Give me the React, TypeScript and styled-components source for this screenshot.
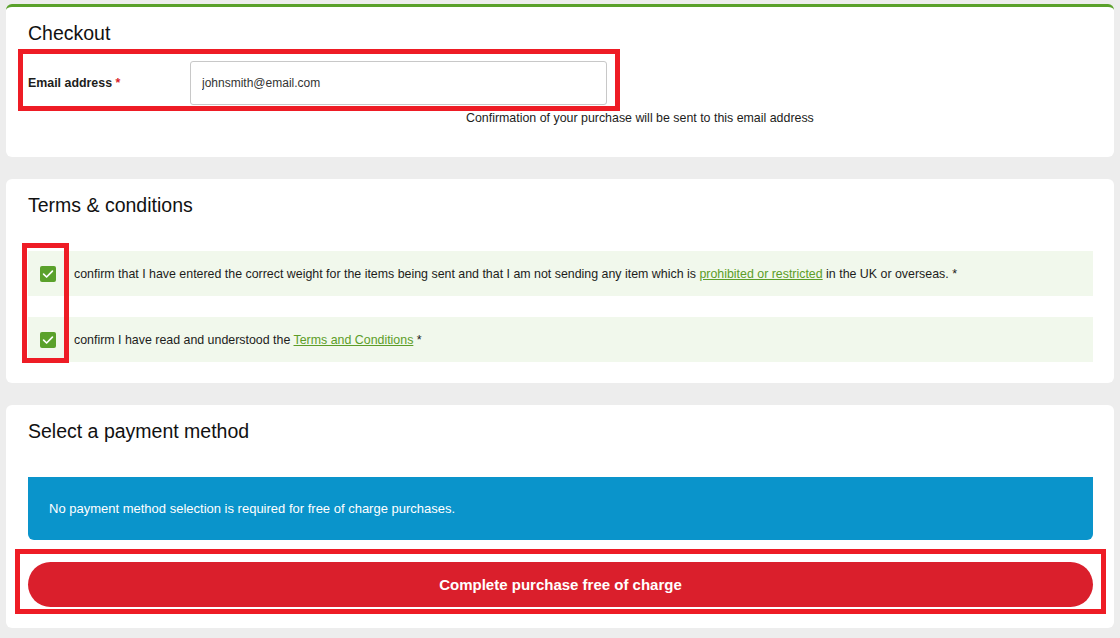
import styled, { createGlobalStyle } from "styled-components";

const GlobalStyle = createGlobalStyle`
  body {
    margin: 0;
    background: #ededed;
    font-family: "Liberation Sans", Arial, sans-serif;
    color: #1d1d1b;
  }
`;

const Page = styled.div`
  display: flex;
  flex-direction: column;
  gap: 22px;
  padding: 4px 6px 8px;
`;

const Card = styled.section<{ $accent?: boolean }>`
  background: #fff;
  border-radius: 6px;
  border-top: ${(props) => (props.$accent ? "3px solid #5aa12b" : "none")};
  padding: 14px 21px 21px 22px;
`;

const Title = styled.h2`
  margin: 0;
  font-size: 19.5px;
  line-height: 24px;
  font-weight: normal;
  color: #111;
`;

// red annotation frames drawn over the screenshot
const Mark = styled.div<{ $t: number; $r: number; $b: number; $l: number; $w?: number }>`
  position: absolute;
  box-sizing: border-box;
  top: ${(p) => -p.$t}px;
  bottom: ${(p) => -p.$b}px;
  left: ${(p) => -p.$l}px;
  right: ${(p) => (p.$w ? "auto" : `${-p.$r}px`)};
  width: ${(p) => (p.$w ? `${p.$w}px` : "auto")};
  border: 5px solid #ee1c25;
  pointer-events: none;
`;

const EmailRow = styled.div`
  position: relative;
  display: flex;
  align-items: center;
  width: fit-content;
  margin-top: 16px;
`;

const Label = styled.label`
  width: 162px;
  font-size: 12.4px;
  font-weight: bold;

  span {
    color: #da1f2c;
  }
`;

const Input = styled.input`
  box-sizing: border-box;
  width: 417px;
  height: 44px;
  padding: 0 11px;
  border: 1px solid #c8c8c8;
  border-radius: 3px;
  font-family: inherit;
  font-size: 12px;
  color: #333;
  outline: none;
`;

const Hint = styled.p`
  margin: 5px 0 10px;
  padding-left: 438px;
  font-size: 12.4px;
  line-height: 16px;
`;

const CheckList = styled.div`
  position: relative;
  display: flex;
  flex-direction: column;
  gap: 21px;
  margin-top: 34px;
`;

const CheckRow = styled.div`
  display: flex;
  align-items: center;
  gap: 18px;
  height: 45px;
  padding-left: 12px;
  background: #f1f8ec;
  font-size: 12.4px;

  a {
    color: #5c9d28;
    text-decoration: underline;
  }
`;

const Box = styled.span`
  flex: none;
  display: flex;
  align-items: center;
  justify-content: center;
  width: 16px;
  height: 16px;
  border-radius: 2px;
  background: #5aa12b;
`;

const CheckMark = () => (
  <svg width="12" height="10" viewBox="0 0 12 10">
    <path d="M1.6 5.2 L4.6 8 L10.4 2.2" fill="none" stroke="#fff" strokeWidth="1.7" strokeLinecap="round" strokeLinejoin="round" />
  </svg>
);

const Notice = styled.div`
  display: flex;
  align-items: center;
  height: 63px;
  margin-top: 34px;
  padding-left: 21px;
  background: #0a94cb;
  border-radius: 0 0 6px 6px;
  color: #fff;
  font-size: 13px;
`;

const ButtonWrap = styled.div`
  position: relative;
  margin-top: 22px;
`;

const PayButton = styled.button`
  display: block;
  width: 100%;
  height: 45px;
  border: none;
  border-radius: 23px;
  background: #da1f2c;
  color: #fff;
  font-family: inherit;
  font-size: 15px;
  font-weight: bold;
  cursor: pointer;
`;

export default function App() {
  return (
    <>
      <GlobalStyle />
      <Page>
        <Card $accent>
          <Title>Checkout</Title>
          <EmailRow>
            <Label>
              Email address <span>*</span>
            </Label>
            <Input defaultValue="johnsmith@email.com" />
            <Mark $t={12} $r={13} $b={6} $l={10} />
          </EmailRow>
          <Hint>Confirmation of your purchase will be sent to this email address</Hint>
        </Card>

        <Card>
          <Title>Terms &amp; conditions</Title>
          <CheckList>
            <CheckRow>
              <Box>
                <CheckMark />
              </Box>
              <span>
                confirm that I have entered the correct weight for the items being sent and that I am not
                sending any item which is <a href="#">prohibited or restricted</a> in the UK or overseas. *
              </span>
            </CheckRow>
            <CheckRow>
              <Box>
                <CheckMark />
              </Box>
              <span>
                confirm I have read and understood the <a href="#">Terms and Conditions</a> *
              </span>
            </CheckRow>
            <Mark $t={8} $r={0} $b={1} $l={6} $w={47} />
          </CheckList>
        </Card>

        <Card>
          <Title>Select a payment method</Title>
          <Notice>No payment method selection is required for free of charge purchases.</Notice>
          <ButtonWrap>
            <PayButton>Complete purchase free of charge</PayButton>
            <Mark $t={13} $r={13} $b={7} $l={13} />
          </ButtonWrap>
        </Card>
      </Page>
    </>
  );
}
